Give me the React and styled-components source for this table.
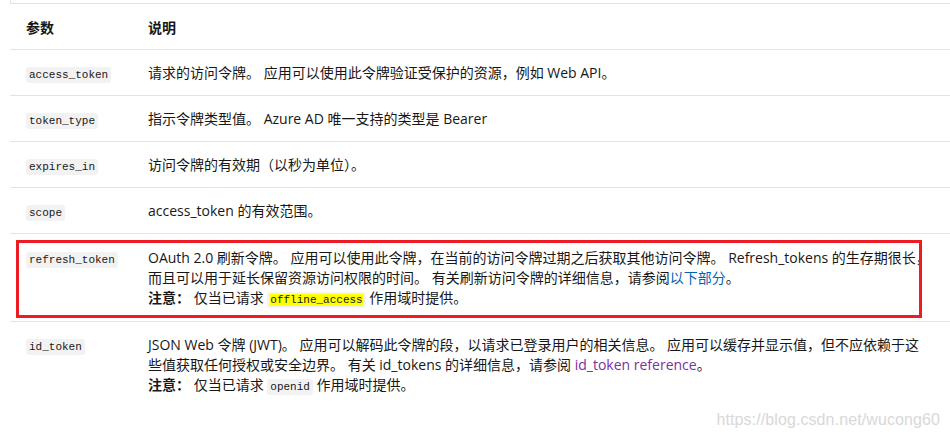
import React from "react";
import styled, { createGlobalStyle } from "styled-components";

const Global = createGlobalStyle`
  html, body { margin: 0; padding: 0; background: #fff; }
  body {
    font-family: "Segoe UI", "Open Sans", "Noto Sans CJK SC", sans-serif;
    color: #171717;
    font-size: 14px;
    -webkit-font-smoothing: antialiased;
  }
`;

const Page = styled.div`
  position: relative;
  width: 950px;
  height: 437px;
  overflow: hidden;
  padding-left: 10px;
  box-sizing: border-box;
`;

const TopBox = styled.div`
  height: 3px;
  border-left: 1px solid #e3e3e3;
  border-bottom: 1px solid #e3e3e3;
`;

const Row = styled.div`
  position: relative;
  display: grid;
  grid-template-columns: 122px 1fr;
  padding: ${(p) => (p.$tall ? "14px 0 13px 16px" : "13px 0 12px 16px")};
  border-bottom: ${(p) => (p.$last ? "none" : "1px solid #e3e3e3")};
  ${(p) =>
    p.$marked &&
    `
    &::after {
      content: "";
      position: absolute;
      left: 6px;
      top: 6px;
      width: 906px;
      height: 78px;
      box-sizing: border-box;
      border: 3px solid #ed1c24;
      pointer-events: none;
    }
  `}
`;

const Line = styled.div`
  height: 20px;
  line-height: 20px;
  white-space: nowrap;
`;

const HeadLine = styled(Line)`
  font-weight: 700;
  font-family: "Noto Sans CJK SC", sans-serif;
`;

const Cell = styled.div`
  display: flex;
  flex-direction: column;
`;

const Code = styled.code`
  font-family: "Liberation Mono", "DejaVu Sans Mono", monospace;
  font-size: 11px;
  background: #f2f2f2;
  border-radius: 3px;
  padding: 2px 3px;
  color: #171717;
`;

const Mark = styled.mark`
  background: #ffff00;
  color: #171717;
`;

const Strong = styled.strong`
  font-weight: 700;
`;

const Link = styled.a`
  color: ${(p) => (p.$visited ? "#7a2fa3" : "#0065b3")};
  text-decoration: none;
`;

const Watermark = styled.div`
  position: absolute;
  right: 10px;
  bottom: 8px;
  font-family: "Liberation Sans", Arial, sans-serif;
  font-size: 16px;
  color: #d8d8d8;
  letter-spacing: 0.1px;
`;

export default function App() {
  return (
    <>
      <Global />
      <Page>
        <TopBox />
        <Row>
          <Cell><HeadLine>参数</HeadLine></Cell>
          <Cell><HeadLine>说明</HeadLine></Cell>
        </Row>
        <Row>
          <Cell><Line><Code>access_token</Code></Line></Cell>
          <Cell><Line>请求的访问令牌。 应用可以使用此令牌验证受保护的资源，例如 Web API。</Line></Cell>
        </Row>
        <Row>
          <Cell><Line><Code>token_type</Code></Line></Cell>
          <Cell><Line>指示令牌类型值。 Azure AD 唯一支持的类型是 Bearer</Line></Cell>
        </Row>
        <Row>
          <Cell><Line><Code>expires_in</Code></Line></Cell>
          <Cell><Line>访问令牌的有效期（以秒为单位）。</Line></Cell>
        </Row>
        <Row>
          <Cell><Line><Code>scope</Code></Line></Cell>
          <Cell><Line>access_token 的有效范围。</Line></Cell>
        </Row>
        <Row $tall $marked>
          <Cell><Line><Code>refresh_token</Code></Line></Cell>
          <Cell>
            <Line>OAuth 2.0 刷新令牌。 应用可以使用此令牌，在当前的访问令牌过期之后获取其他访问令牌。 Refresh_tokens 的生存期很长，</Line>
            <Line>而且可以用于延长保留资源访问权限的时间。 有关刷新访问令牌的详细信息，请参阅<Link>以下部分</Link>。</Line>
            <Line><Strong>注意：</Strong> 仅当已请求 <Code><Mark>offline_access</Mark></Code> 作用域时提供。</Line>
          </Cell>
        </Row>
        <Row $last>
          <Cell><Line><Code>id_token</Code></Line></Cell>
          <Cell>
            <Line>JSON Web 令牌 (JWT)。 应用可以解码此令牌的段，以请求已登录用户的相关信息。 应用可以缓存并显示值，但不应依赖于这</Line>
            <Line>些值获取任何授权或安全边界。 有关 id_tokens 的详细信息，请参阅 <Link $visited>id_token reference</Link>。</Line>
            <Line><Strong>注意：</Strong> 仅当已请求 <Code>openid</Code> 作用域时提供。</Line>
          </Cell>
        </Row>
        <Watermark>https://blog.csdn.net/wucong60</Watermark>
      </Page>
    </>
  );
}
